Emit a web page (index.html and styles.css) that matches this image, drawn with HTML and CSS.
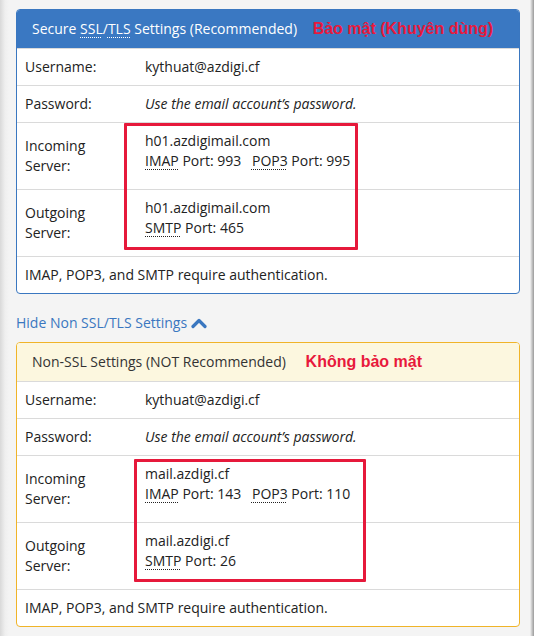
FILE: index.html
```html
<!DOCTYPE html>
<html>
<head>
<meta charset="utf-8">
<link rel="stylesheet" href="styles.css">
</head>
<body>
<div class="page">
  <div class="panel panel-primary">
    <div class="panel-heading">
      <span>Secure <abbr>SSL</abbr>/<abbr>TLS</abbr> Settings (Recommended)</span>
      <span class="note note-1">Bảo mật (Khuyên dùng)</span>
    </div>
    <table class="settings">
      <tr><td class="label">Username:</td><td>kythuat@azdigi.cf</td></tr>
      <tr><td class="label">Password:</td><td><em>Use the email account’s password.</em></td></tr>
      <tr><td class="label">Incoming<br>Server:</td><td class="server"><div>h01.azdigimail.com</div><div class="ports"><abbr>IMAP</abbr> Port: 993 <span class="gap"></span><abbr>POP3</abbr> Port: 995</div></td></tr>
      <tr><td class="label">Outgoing<br>Server:</td><td class="server"><div>h01.azdigimail.com</div><div class="ports"><abbr>SMTP</abbr> Port: 465</div></td></tr>
      <tr><td colspan="2">IMAP, POP3, and SMTP require authentication.</td></tr>
    </table>
    <div class="mark mark-1"></div>
  </div>

  <a class="toggle">Hide Non SSL/TLS Settings <svg class="chev" width="16" height="12" viewBox="0 0 16 12"><polyline points="2,9.5 8,3.5 14,9.5" fill="none" stroke="#3a77c0" stroke-width="3.2" stroke-linecap="round" stroke-linejoin="round"/></svg></a>

  <div class="panel panel-warning">
    <div class="panel-heading">
      <span>Non-SSL Settings (NOT Recommended)</span>
      <span class="note note-2">Không bảo mật</span>
    </div>
    <table class="settings">
      <tr><td class="label">Username:</td><td>kythuat@azdigi.cf</td></tr>
      <tr><td class="label">Password:</td><td><em>Use the email account’s password.</em></td></tr>
      <tr><td class="label">Incoming<br>Server:</td><td class="server"><div>mail.azdigi.cf</div><div class="ports"><abbr>IMAP</abbr> Port: 143 <span class="gap"></span><abbr>POP3</abbr> Port: 110</div></td></tr>
      <tr><td class="label">Outgoing<br>Server:</td><td class="server"><div>mail.azdigi.cf</div><div class="ports"><abbr>SMTP</abbr> Port: 26</div></td></tr>
      <tr><td colspan="2">IMAP, POP3, and SMTP require authentication.</td></tr>
    </table>
    <div class="mark mark-2"></div>
  </div>
</div>
</body>
</html>
```

FILE: styles.css
```css
html, body {
  margin: 0;
  padding: 0;
}
body {
  width: 534px;
  height: 636px;
  overflow: hidden;
  background: linear-gradient(to right, #d9d9d9 0, #efefef 5px, #f4f4f4 9px, #f4f4f4 530px, #dcdcdc 531px, #9a9a9a 534px);
  font-family: "Open Sans", "Noto Sans", sans-serif;
  font-size: 14px;
  line-height: 20px;
  color: #222;
}
.page {
  padding: 9px 14px 0 16px;
}
.panel {
  position: relative;
  width: 502px;
  background: #fff;
  border: 1px solid;
  border-radius: 4px;
}
.panel-primary {
  border-color: #3a77c0;
  margin-bottom: 19px;
}
.panel-warning {
  border-color: #f0b429;
}
.panel-heading {
  padding: 9px 15px 9px;
  border-radius: 3px 3px 0 0;
}
.panel-primary .panel-heading {
  background: #3a78c2;
  color: #fff;
}
.panel-warning .panel-heading {
  background: #fcf7df;
  color: #333;
}
abbr {
  text-decoration: underline dotted;
  text-underline-offset: 3px;
  text-decoration-thickness: 1px;
}
.note {
  font-family: "Liberation Sans", Arial, sans-serif;
  font-weight: bold;
  font-size: 16px;
  color: #e8193c;
}
.note-1 { margin-left: 12px; }
.note-2 { margin-left: 16px; }
.settings {
  width: 100%;
  border-collapse: collapse;
}
.settings td {
  border-top: 1px solid #dadada;
  padding: 8px 8px;
  vertical-align: middle;
}
.settings td.label {
  width: 104px;
}
.settings td.server {
  vertical-align: top;
  padding-bottom: 18px;
}
.gap {
  display: inline-block;
  width: 7px;
}
em {
  font-style: italic;
}
.toggle {
  display: flex;
  align-items: center;
  gap: 4px;
  color: #3a77c0;
  line-height: 20px;
  margin-bottom: 9px;
}
.chev {
  display: block;
}
.mark {
  position: absolute;
  border: 3px solid #e6193b;
  box-sizing: border-box;
  border-radius: 1px;
}
.mark-1 {
  left: 107px;
  top: 113px;
  width: 234px;
  height: 127px;
}
.mark-2 {
  left: 117px;
  top: 116px;
  width: 232px;
  height: 123px;
}
```
